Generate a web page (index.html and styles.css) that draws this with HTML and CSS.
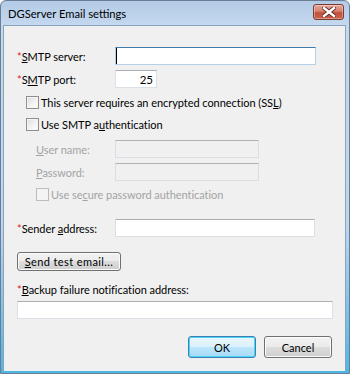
FILE: index.html
```html
<!DOCTYPE html>
<html lang="en">
<head>
  <meta charset="UTF-8" />
  <title>DGServer Email settings</title>
  <link rel="stylesheet" href="styles.css">
</head>
<body>
  <div class="window">
    <div class="titlebar">
      <span class="title">DGServer Email settings</span>
      <button class="close-btn" aria-label="Close">
        <svg width="14" height="10" viewBox="0 0 14 10">
          <path d="M2 1 L12 9 M12 1 L2 9" stroke="#5a2a22" stroke-width="4.2" stroke-linecap="square"/>
          <path d="M2 1 L12 9 M12 1 L2 9" stroke="#fff" stroke-width="2.4" stroke-linecap="square"/>
        </svg>
      </button>
    </div>
    <div class="client">
      <div class="row r-server">
        <label class="lbl"><span class="req">*</span><u>S</u>MTP server:</label>
        <input class="field w-wide focus" type="text" value="">
      </div>
      <div class="row r-port">
        <label class="lbl"><span class="req">*</span>S<u>M</u>TP port:</label>
        <input class="field w-port num" type="text" value="25">
      </div>
      <div class="check r-ssl">
        <span class="box"></span>
        <span>This server requires an encrypted connection (SS<u>L</u>)</span>
      </div>
      <div class="check r-auth">
        <span class="box"></span>
        <span>Use SMTP a<u>u</u>thentication</span>
      </div>
      <div class="row sub r-user">
        <label class="lbl off"><u>U</u>ser name:</label>
        <input class="field w-mid" type="text" disabled>
      </div>
      <div class="row sub r-pass">
        <label class="lbl off"><u>P</u>assword:</label>
        <input class="field w-mid" type="password" disabled>
      </div>
      <div class="check sub r-spa off">
        <span class="box"></span>
        <span>Use se<u>c</u>ure password authentication</span>
      </div>
      <div class="row r-sender">
        <label class="lbl"><span class="req">*</span>Sender <u>a</u>ddress:</label>
        <input class="field w-sender" type="text">
      </div>
      <button class="btn btn-test"><u>S</u>end test email...</button>
      <div class="caption"><span class="req">*</span><u>B</u>ackup failure notification address:</div>
      <input class="field w-full" type="text">
      <div class="actions">
        <button class="btn btn-default">OK</button>
        <button class="btn">Cancel</button>
      </div>
    </div>
  </div>
</body>
</html>
```
FILE: styles.css
```css
*,*::before,*::after{box-sizing:border-box;margin:0;padding:0}
body{width:350px;height:374px;overflow:hidden;font-family:'Lato','Liberation Sans',sans-serif;font-size:11px;letter-spacing:-.05px;color:#000;background:#fff}
u{text-decoration:underline;text-underline-offset:1px}

.window{width:350px;height:374px;border:1px solid #6b7d92;border-radius:6px 6px 0 0;
  background:linear-gradient(180deg,#b3cbe6 0,#c4d8ef 24px,#bfd5ee 60%,#4cb7e4 100%);
  padding:0 3px 2px 2px;display:flex;flex-direction:column}
.titlebar{height:24px;display:flex;align-items:center;justify-content:space-between;padding:0 2px 0 5px;flex:none}
.title{font-size:11.2px;letter-spacing:0;color:#000;margin-top:1px}
.close-btn{width:31px;height:16px;margin-top:-3px;border:1px solid #7a3b31;border-radius:3px;
  background:linear-gradient(180deg,#e7a89b 0,#d6806f 45%,#c2503c 55%,#c8614c 100%);
  display:flex;align-items:center;justify-content:center;box-shadow:inset 0 0 0 1px rgba(255,255,255,.35)}
.client{flex:1;background:#f0f0f0;border:1px solid #8aa2bd;border-bottom:none;padding:21px 13px 0 13px}

.row{display:flex;align-items:center;height:18px}
.lbl{width:98px;flex:none;white-space:nowrap}
.req{color:#e4161a}
.off{color:#a3a3a3}
.sub{margin-left:19px}
.sub .lbl{width:79px}

.field{height:18px;border:1px solid #dbdfe6;border-top-color:#abadb3;background:#fff;font:inherit;padding:0 4px;outline:none}
.field:disabled{background:#f0f0f0;border-color:#d9dee4;border-top-color:#adb2b5}
.focus{border-color:#b5cfe7;border-top-color:#3d7bad;box-shadow:inset 1px 0 0 #000}
.w-wide{width:201px}
.w-port{width:42px}
.num{text-align:right;padding-right:3px;font-size:11.5px}
.w-mid{width:144px}
.w-sender{width:200px}
.w-full{width:316px;display:block}

.check{display:flex;align-items:center;height:13px;margin-left:9px;white-space:nowrap}
.box{width:13px;height:13px;flex:none;margin-right:2px;border:1px solid #8e8f8f;
  background:linear-gradient(135deg,#dcdcdc 0,#f4f4f4 60%,#fff 100%);box-shadow:inset 0 0 0 1px #f4f4f4}
.check.off .box{border-color:#bcbcbc;background:#f4f4f4}
.check.sub{margin-left:19px}

.r-port{margin-top:5px}
.r-ssl{margin-top:8px}
.r-auth{margin-top:9px}
.r-user{margin-top:9px}
.r-pass{margin-top:5px}
.r-spa{margin-top:7px}
.r-sender{margin-top:18px}

.btn{display:block;height:19px;border:1px solid #707070;border-radius:3px;font:inherit;color:#000;white-space:nowrap;
  background:linear-gradient(180deg,#f2f2f2 0,#ebebeb 50%,#dddddd 50%,#cfcfcf 100%);box-shadow:inset 0 0 0 1px #fbfbfb}
.btn-test{margin-top:15px;width:104px;padding:0 4px 1px;letter-spacing:.4px}
.caption{margin-top:11px;height:16px;line-height:16px;white-space:nowrap}
.w-full{margin-top:3px}
.actions{display:flex;justify-content:flex-end;gap:8px;margin-top:17px}
.actions .btn{width:68px;height:22px}
.btn-default{border-color:#3c7fb1;background:linear-gradient(180deg,#eaf6fd 0,#d9f0fc 50%,#bee6fd 50%,#a7d9f5 100%);box-shadow:inset 0 0 0 1px #48d5f8}
```
